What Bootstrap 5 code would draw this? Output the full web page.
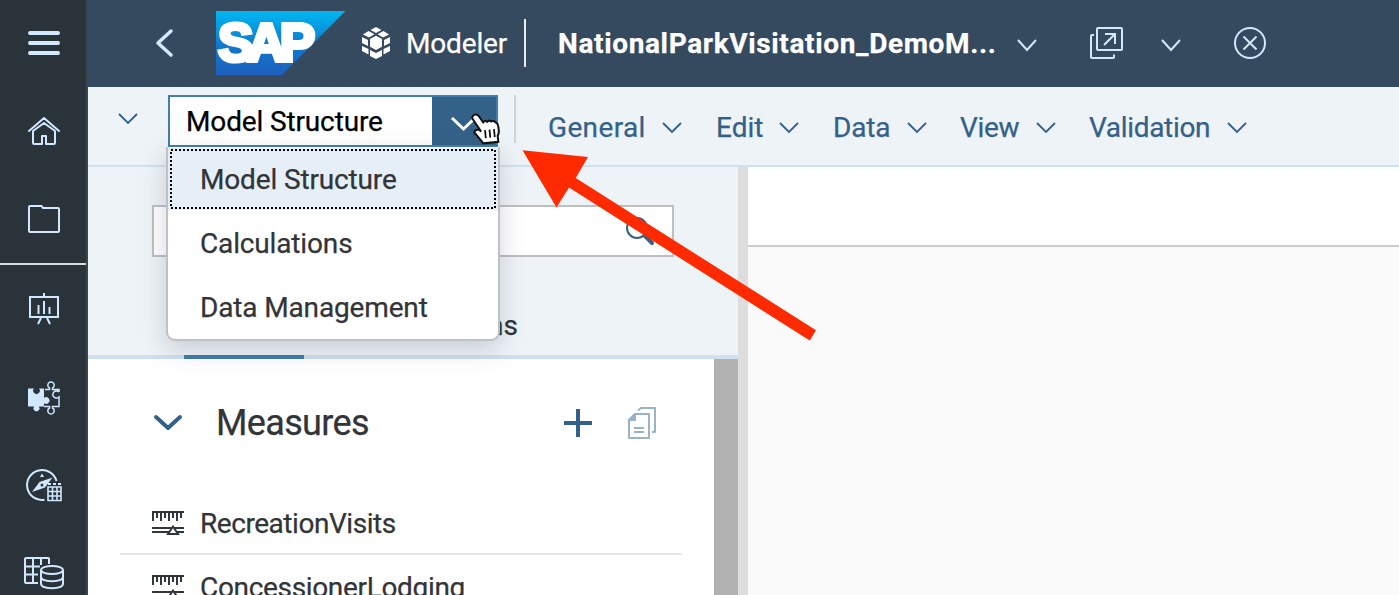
<!DOCTYPE html>
<html lang="en">
<head>
<meta charset="utf-8">
<meta name="viewport" content="width=device-width, initial-scale=1">
<title>Modeler</title>
<link href="https://cdn.jsdelivr.net/npm/bootstrap@5.3.0/dist/css/bootstrap.min.css" rel="stylesheet">
<style>
  body { font-family: Roboto, "Liberation Sans", sans-serif; font-size: 28px; line-height: 32px; color: #323437; background: #fafafa; }
  svg { display: block; flex: none; }
  .line-icon { fill: none; stroke: #d1e8ff; stroke-width: 2; }
  .rail { width: 88px; background: #2a323a; border-right: 2px solid #3d454d; }
  .rail-rule { height: 2px; background: #d9dcd8; }
  .shell { height: 87px; background: #354a5f; color: #fff; }
  .shell-app { width: 118px; letter-spacing: -.15px; }
  .shell-rule { width: 2px; height: 48px; margin-bottom: 1px; background: #eee; }
  .shell-title { width: 459px; margin-left: 32px; letter-spacing: .64px; }
  .tools { height: 80px; background: #eef3f7; border-bottom: 2px solid #cfe0ef; color: #346187; }
  .menus { padding: 4px 0 0 32px; }
  .menus svg { margin-top: -4px; }
  .chev { fill: none; stroke: #346187; stroke-width: 1.8; }
  .picker { width: 330px; height: 52px; margin: 8px 0 0 30px; border: 2px solid #427cac; background: #fff; color: #000; letter-spacing: -.14px; }
  .picker-text { padding: 9px 0 0 16px; }
  .picker-btn { width: 64px; background: #346187; }
  .tool-rule { width: 2px; height: 48px; margin: 8px 0 0 16px; background: #cdd3d9; }
  .side { width: 650px; background: #fff; }
  .side-top { height: 192px; background: #eef3f7; border-bottom: 4px solid #cfe0ef; }
  .search-box { width: 522px; height: 52px; margin: 38px 0 0 64px; border: 2px solid #bfbfbf; background: #fff; }
  .tab-text { width: 430px; margin-top: 53px; }
  .tab-mark { width: 120px; height: 4px; margin-bottom: -4px; margin-left: 96px; background: #427cac; }
  .group-head { height: 128px; }
  .group-title { width: 347px; font-size: 36px; letter-spacing: -.65px; }
  .bar { width: 24px; background: #b1b1b1; }
  .splitter { width: 10px; background: #ddd; }
  .canvas-top { height: 80px; background: #fff; border-bottom: 2px solid #ccc; }
  .options { left: 166px; top: 147px; width: 334px; height: 194px; border: 2px solid #bfc1c4; border-top: 0; border-radius: 0 0 9px 9px; background: #fff; box-shadow: 0 8px 26px rgba(60,70,90,.22); z-index: 2; padding-top: 1px; letter-spacing: -.15px; }
  .option { height: 64px; padding: 18px 0 0 32px; }
  .option.chosen { height: 62px; background: #e6eef7; padding-top: 16px; }
  .focus-frame { top: 1px; left: 2px; }
  .arrow { left: 0; top: 0; z-index: 3; }
  .measure-row { height: 64px; width: 562px; margin-left: 32px; border-bottom: 2px solid #e5e5e5; }
  .measure-row.first { height: 68px; padding-top: 4px; }
  .measure-row span { padding-top: 17px; letter-spacing: -.45px; }
  .measure-row .wide { letter-spacing: -.33px; }
  .measure-row svg { fill: none; stroke: #32363a; stroke-width: 2; }
  .tx { white-space: nowrap; flex: none; -webkit-text-stroke: .25px currentColor; }
</style>
</head>
<body class="vh-100 overflow-hidden d-flex position-relative">
<nav class="rail d-flex flex-column flex-shrink-0 vh-100 overflow-hidden">
  <svg class="line-icon" width="86" height="88"><path d="M30 33H58M30 43H58M30 53H58" stroke-width="4" stroke-linecap="round"/></svg>
  <svg class="line-icon" width="86" height="88"><path d="M29 43L44 30L59 43M33 43V55Q33 56 34 56H42V48H46V56H54Q55 56 55 55V43L44 35Z" stroke-linejoin="round" stroke-linecap="round"/></svg>
  <svg class="line-icon" width="86" height="87"><path d="M30 30H41.500L43 32H58Q59 32 59 33V55Q59 56 58 56H30Q29 56 29 55V31Q29 30 30 30Z"/></svg>
  <div class="rail-rule flex-shrink-0"></div>
  <svg class="line-icon" width="86" height="88"><path d="M44 28V32M30 32H58V52H30ZM38.500 40V49M44 36V49M49.500 42V49M41 53L38 59M47 53L50 59"/></svg>
  <svg class="line-icon" width="86" height="88"><g transform="translate(0 2.500)"><path d="M28 33H34A3.300 3.300 0 1 0 39 33H44V42.500A3.300 3.300 0 1 1 44 47.500V51H39A3 3 0 1 1 34 51H28Z" fill="#d1e8ff" stroke="none"/><path d="M45 34H49.500V32.500A3.200 3.200 0 1 1 52.500 32.500V34H59V36.500M59 36.500A3.600 3.600 0 1 0 59 41.500V51H52.500V52.500A3.200 3.200 0 1 1 49.500 52.500V51H44" stroke-width="1.500"/></g></svg>
  <svg class="line-icon" width="86" height="88"><g transform="translate(0 1)"><path d="M56.500 39A15 15 0 1 0 44.500 57.800"/><path d="M32 50L39.500 40L52.500 35.500L45 45.500Z" fill="#d1e8ff" stroke="none"/><circle cx="42" cy="43" r="1.500" fill="#2a323a" stroke="none"/><path d="M40 35L42 31.500L44 35Z" fill="#d1e8ff" stroke="none"/><path d="M48 45H61V58.500H48ZM48 49.500H61M48 54H61M52.500 45V58M57 45V58" stroke-width="1.600"/><path d="M48 42H61" stroke-dasharray="3 2"/></g></svg>
  <svg class="line-icon" width="86" height="88"><g transform="translate(0 2)"><path d="M49 33V28Q49 27 48 27H26Q25 27 25 28V51Q25 52 26 52H38M25 35.500H40M25 43.500H38M33 27V52M41 27V34"/><ellipse cx="52" cy="39" rx="11" ry="4"/><path d="M41 39V53C41 58.500 63 58.500 63 53V39M41 46C41 51.500 63 51.500 63 46"/></g></svg>
</nav>

<div class="flex-grow-1 d-flex flex-column vh-100 overflow-hidden">
  <header class="shell d-flex align-items-center flex-shrink-0">
    <svg width="128" height="87"><path d="M83 31L70 43L83 55" fill="none" stroke="#d1e8ff" stroke-width="3.500" stroke-linecap="round" stroke-linejoin="round"/></svg>
    <svg width="130" height="87" role="img" aria-label="SAP"><defs><linearGradient id="brand" x2="0" y2="1"><stop stop-color="#00b8f1"/><stop offset=".5" stop-color="#0d7cd0"/><stop offset="1" stop-color="#1f5fbe"/></linearGradient></defs><path d="M0 11H129.500L66 75H0Z" fill="url(#brand)"/><text x="2" y="61" font-family="Liberation Sans" font-weight="700" font-size="53" fill="#fff" stroke="#fff" stroke-width="4" textLength="97" lengthAdjust="spacing">SAP</text></svg>
    <svg class="ms-3" width="44" height="87"><path fill="#fff" d="M14 27L19.500 30L14 33L8.500 30ZM6.500 31L12.500 34.200L7 37.500L1 34.500ZM21.500 31L15.500 34.200L21 37.500L27 34.500ZM14 35.700L20 39V46.700L14 50L8 46.700V39ZM0 37L6 40V46L0 43ZM28 37L22 40V46L28 43ZM0 46L6.500 49V54.500L0 51ZM28 46L21.500 49V54.500L28 51ZM8 50L14 53L20 50V56L14 59L8 56Z"/></svg>
    <span class="tx shell-app">Modeler</span>
    <div class="shell-rule"></div>
    <strong class="tx shell-title">NationalParkVisitation_DemoM...</strong>
    <svg class="line-icon" width="216" height="87"><path d="M1 40L10 50L19 40M145 40L154 50L163 40"/><path d="M81 28H104Q105 28 105 29V49Q105 50 104 50H81Q80 50 80 49V29Q80 28 81 28ZM77 35H75Q74 35 74 36V57Q74 58 75 58H96Q97 58 97 57V54.500M87 45L98 34M88 34H98V44"/></svg>
    <svg class="line-icon" width="60" height="87"><circle cx="17" cy="43" r="15"/><path d="M10.500 36.500L23.500 49.500M23.500 36.500L10.500 49.500"/></svg>
  </header>

  <section class="tools d-flex flex-shrink-0">
    <svg class="chev" width="50" height="78"><path d="M31 27L40 36L49 27"/></svg>
    <div class="picker d-flex justify-content-between flex-shrink-0">
      <span class="tx picker-text">Model Structure</span>
      <span class="picker-btn"><svg width="64" height="48"><path d="M20 21L31.500 32L43 21" fill="none" stroke="#fff" stroke-width="3"/></svg></span>
    </div>
    <div class="tool-rule"></div>
    <div class="menus d-flex align-items-center">
      <span class="tx" style="width:114px;letter-spacing:.35px">General</span><svg class="chev" width="54" height="78"><path d="M1 36L10 45L19 36"/></svg>
      <span class="tx" style="width:63px">Edit</span><svg class="chev" width="54" height="78"><path d="M1 36L10 45L19 36"/></svg>
      <span class="tx" style="width:74px;letter-spacing:-.2px">Data</span><svg class="chev" width="53" height="78"><path d="M1 36L10 45L19 36"/></svg>
      <span class="tx" style="width:76px;letter-spacing:-.3px">View</span><svg class="chev" width="53" height="78"><path d="M1 36L10 45L19 36"/></svg>
      <span class="tx" style="width:138px;letter-spacing:-.33px">Validation</span><svg class="chev" width="20" height="78"><path d="M1 36L10 45L19 36"/></svg>
    </div>
  </section>

  <main class="d-flex flex-grow-1 overflow-hidden">
    <aside class="side d-flex flex-column flex-shrink-0">
      <div class="side-top flex-shrink-0 d-flex flex-column">
        <div class="search-box d-flex justify-content-end flex-shrink-0"><svg width="46" height="48" fill="none" stroke="#346187"><circle cx="11" cy="21" r="10" stroke-width="2"/><path d="M18.500 28.500L26 36" stroke-width="4" stroke-linecap="round"/></svg></div>
        <div class="tx tab-text text-end">Dimensions</div>
        <div class="tab-mark mt-auto"></div>
      </div>
      <div class="d-flex flex-grow-1 overflow-hidden">
        <div class="flex-grow-1">
          <div class="group-head d-flex align-items-center">
            <svg width="128" height="128"><path d="M68 58L80 69L92 58" fill="none" stroke="#346187" stroke-width="4" stroke-linecap="round" stroke-linejoin="round"/></svg>
            <span class="tx group-title">Measures</span>
            <svg width="110" height="128" fill="none"><path d="M1 64H29M15 50V78" stroke="#346187" stroke-width="4"/><g stroke="#9bb3c6" stroke-width="2" stroke-linejoin="round"><path d="M72 55H86V79H66V61ZM75 51.500L78 49H92V73H89M71 69H81M71 73H81"/><path d="M66 61L72 55V61Z" fill="#9bb3c6"/></g></svg>
          </div>
          <div class="measure-row first d-flex"><svg width="80" height="64"><use href="#ruler"/></svg><span class="tx">RecreationVisits</span></div>
          <div class="measure-row d-flex"><svg width="80" height="64"><g id="ruler"><path d="M32 21H64M33 21V30M37 21V27M41 21V30M45 21V27M49 21V30M53 21V27M57 21V30M61 21V27M32 37H64M32 41H64"/><path d="M48 43L53 35.500L58 43Z" fill="#fff"/></g></svg><span class="tx wide">ConcessionerLodging</span></div>
        </div>
        <div class="bar"></div>
      </div>
    </aside>
    <div class="splitter flex-shrink-0"></div>
    <div class="flex-grow-1"><div class="canvas-top"></div></div>
  </main>
</div>

<div class="options position-absolute">
  <div class="option chosen position-relative"><svg class="focus-frame position-absolute" width="326" height="60"><rect x="1" y="1" width="324" height="58" fill="none" stroke="#000" stroke-width="2" stroke-dasharray="2 2"/></svg><span class="tx">Model Structure</span></div>
  <div class="option"><span class="tx">Calculations</span></div>
  <div class="option"><span class="tx">Data Management</span></div>
</div>

<svg class="arrow position-absolute" width="850" height="360"><path d="M522.500 150.300L588 157L575.700 178L816 330.300L809.700 340.500L569 187.500L556.500 207.500Z" fill="#ff2a00"/><g transform="rotate(-6 486 130)"><path d="M474 115q3-3 6 0l4 7q2-2 4 0q2-2 4 0q2-1 4 1l2 2q2 8-1 12v6h-15l-8-12q1-3 5-2l2 2-7-13q-1-2 0-3Z" fill="#fff" stroke="#111" stroke-width="2"/><path d="M485 130V138M489.500 130V138M494 130V138" stroke="#111" stroke-width="1.800"/></g></svg>
<script src="https://cdn.jsdelivr.net/npm/bootstrap@5.3.0/dist/js/bootstrap.bundle.min.js"></script>
</body>
</html>
